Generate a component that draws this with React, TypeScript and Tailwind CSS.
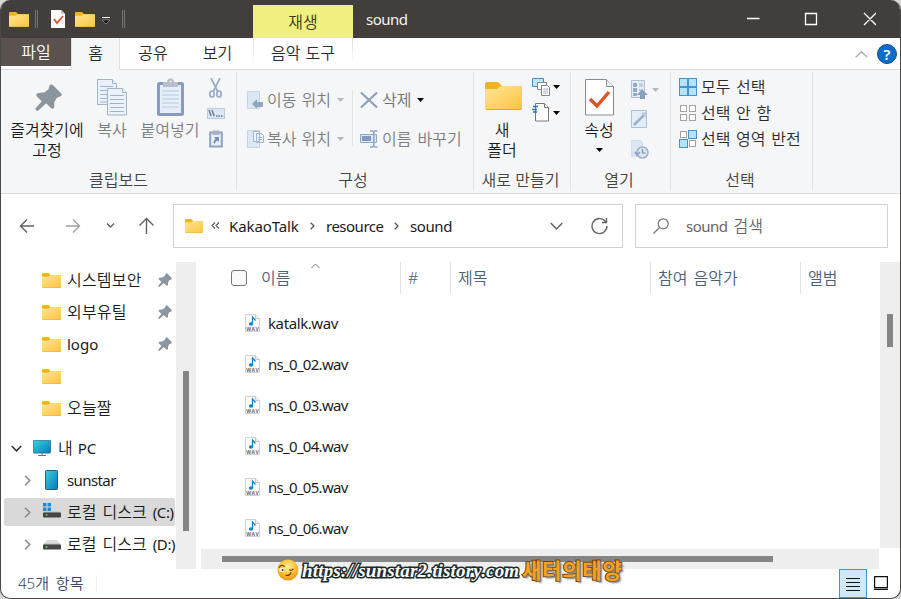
import type { ReactNode } from "react";

const PINNED = [
  { label: "시스템보안", pinned: true },
  { label: "외부유틸", pinned: true },
  { label: "logo", pinned: true },
  { label: "", pinned: false },
  { label: "오늘짤", pinned: false },
];

const FILES = ["katalk.wav", "ns_0_02.wav", "ns_0_03.wav", "ns_0_04.wav", "ns_0_05.wav", "ns_0_06.wav"];

export default function App() {
  return (
    <div className="h-[599px] w-[901px] overflow-hidden bg-[#d8d8d8] font-['Noto_Sans','Noto_Sans_CJK_KR',sans-serif] text-[15px] leading-5 font-[350] text-[#1b1b1b]">
      <div className="relative flex h-full flex-col overflow-hidden rounded-[10px] border border-t-0 border-[#4a4745] bg-white">
        <TitleBar />
        <TabRow />
        <Ribbon />
        <AddressRow />
        <div className="flex h-[307px] shrink-0">
          <Sidebar />
          <FileList />
        </div>
        <StatusBar />
        <Watermark />
      </div>
    </div>
  );
}

function TitleBar() {
  return (
    <div className="flex h-[38px] shrink-0 bg-[#423e3b]">
      <div className="flex w-[252px] items-center pl-2">
        <Folder className="h-[15px] w-5" />
        <div className="ml-[6px] h-[18px] w-[3px] border-x border-[#77736f]" />
        <svg className="ml-[13px] h-[18px] w-[14px]" viewBox="0 0 14 18">
          <path d="M0 0h10l4 4v14H0z" fill="#fafafa" />
          <path d="M10 0v4h4" fill="#cfcfcf" />
          <path d="M3 9l3 4 6-7" fill="none" stroke="#df552b" strokeWidth="1.8" />
        </svg>
        <Folder className="ml-[10px] h-[15px] w-5" />
        <svg className="ml-[7px] mt-1 h-[8px] w-2" viewBox="0 0 8 8">
          <path d="M0 .5h8" stroke="#fff" />
          <path d="M0 3h8L4 7z" fill="#111" stroke="#aaa" strokeWidth=".6" />
        </svg>
        <div className="ml-[12px] h-[18px] w-[3px] border-x border-[#77736f]" />
      </div>
      <div className="mt-[5px] flex h-[33px] w-[100px] items-center justify-center bg-[#eff07e] text-[16px] text-[#3c3a20]">재생</div>
      <div className="flex-1 pl-[13px] pt-[9px] font-normal tracking-[-.5px] text-[#f3f3f3]">sound</div>
      <svg className="mr-[24px] h-[38px] w-[130px] shrink-0" viewBox="746 0 130 38" fill="none" stroke="#fff" strokeWidth="1.3">
        <path d="M747 18.5h12.5M805.500 13.500h11v11h-11zM864 13l12 12M876 13l-12 12" />
      </svg>
    </div>
  );
}

function TabRow() {
  return (
    <div className="flex h-8 shrink-0 bg-[linear-gradient(#fff_31px,#dadbdc_31px)] text-[16px] text-[#2b2b2b]">
      <div className="flex h-7 w-[70px] items-center justify-center bg-[#59524e] text-white">파일</div>
      <div className="flex h-8 w-[49px] items-center justify-center border-x border-[#dfe0e1] bg-[#f4f6f8] pb-[2px]">홈</div>
      <div className="flex h-[30px] w-[66px] items-center justify-center">공유</div>
      <div className="flex h-[30px] w-[63px] items-center justify-center">보기</div>
      <div className="ml-1 h-[26px] w-px bg-linear-to-b from-[#dcdcdc] to-white" />
      <div className="flex h-[30px] w-[98px] items-center justify-center [word-spacing:1px]">음악 도구</div>
      <div className="h-[26px] w-px bg-linear-to-b from-[#dcdcdc] to-white" />
      <div className="flex flex-1 items-center justify-end pr-[3px]">
        <svg className="h-[7px] w-[13px]" viewBox="0 0 13 7" fill="none" stroke="#aaa" strokeWidth="1.400">
          <path d="M.7 6.300L6.500.8l5.800 5.500" />
        </svg>
        <div className="ml-[9px] flex size-5 items-center justify-center rounded-full border border-[#0d4f94] bg-[#0d6cc8] text-[15px] leading-none font-semibold text-white">?</div>
      </div>
    </div>
  );
}

function Group({ label, className, children }: { label: string; className: string; children: ReactNode }) {
  return (
    <div className={`flex shrink-0 flex-col ${className}`}>
      <div className="flex h-[100px]">{children}</div>
      <div className="h-5 text-center whitespace-nowrap text-[#444]">{label}</div>
    </div>
  );
}

function Divider() {
  return <div className="mt-[2px] h-[119px] w-px shrink-0 bg-[#e1e3e5]" />;
}

function BigButton({ icon, lines, caret, className }: { icon: ReactNode; lines: string[]; caret?: boolean; className: string }) {
  return (
    <div className={`flex shrink-0 flex-col items-center whitespace-nowrap ${className}`}>
      <div className="flex h-[50px] w-full justify-center">{icon}</div>
      {lines.map((l) => <div key={l}>{l}</div>)}
      {caret && <Caret className="mt-2 text-black" />}
    </div>
  );
}

function Caret({ className }: { className: string }) {
  return (
    <svg className={`h-1 w-[7px] shrink-0 ${className}`} viewBox="0 0 7 4" fill="currentColor">
      <path d="M0 0h7L3.500 4z" />
    </svg>
  );
}

function Ribbon() {
  return (
    <div className="flex h-[124px] shrink-0 border-b border-[#dadbdc] bg-[#f4f6f8] text-[16px]">
      <Group label="클립보드" className="w-[235px]">
        <BigButton
          className="ml-2 w-[76px]"
          lines={["즐겨찾기에", "고정"]}
          icon={<Pin className="mt-[14px] ml-[2px] size-[27px]" />}
        />
        <BigButton
          className="ml-[11px] w-8 text-[#7c7e80]"
          lines={["복사"]}
          icon={
            <svg className="mt-[9px] h-[37px] w-[30px]" viewBox="0 0 30 37" fill="#eaf1fa" stroke="#9fb2ce">
              <path d="M.5.5h15l4 4v21H.5z" />
              <path d="M15.500.5v4h4M3 7.500h13M3 11.500h13M3 15.500h13M3 19.500h13M3 23h13" />
              <path d="M10.500 9.500h15l4 4v22.500h-19z" />
              <path d="M25.500 9.500v4h4M13 16.500h14M13 20.500h14M13 24.500h14M13 28.500h14M13 32.500h14" />
            </svg>
          }
        />
        <BigButton
          className="ml-[11px] w-[62px] text-[#7c7e80]"
          lines={["붙여넣기"]}
          icon={
            <svg className="mt-2 h-[38px] w-[27px]" viewBox="0 0 27 38">
              <rect x="1.500" y="5.500" width="24" height="31" rx="1" fill="#e4edf8" stroke="#869bbd" strokeWidth="3" />
              <path d="M5 13h17M5 17h17M5 21h17M5 25h17M5 29h17" stroke="#bacce2" />
              <path d="M6 9V4h4c0-5 7-5 7 0h4v5z" fill="#b6bfca" />
              <circle cx="13.500" cy="3.500" r="1" fill="#edf0f4" />
            </svg>
          }
        />
        <div className="ml-[5px] flex w-[19px] flex-col items-center pt-2">
          <svg className="h-[20px] w-[13px]" viewBox="0 0 13 20" fill="none" stroke="#9aabc5">
            <path d="M2 0l7 14M11 0L4 14" strokeWidth="1.700" />
            <ellipse cx="3" cy="16" rx="2.200" ry="3" strokeWidth="1.700" />
            <ellipse cx="10" cy="16" rx="2.200" ry="3" strokeWidth="1.700" />
          </svg>
          <svg className="mt-[10px] h-[11px] w-[18px]" viewBox="0 0 18 11">
            <path d="M.5.5h17v10H.5z" fill="#dbe7f4" stroke="#bccadd" />
            <path d="M2 2l2 6M5 2l2 6M9 8h1.500M11.500 8H13M14 8h1.500" stroke="#647793" strokeWidth="1.400" />
          </svg>
          <svg className="mt-[10px] h-[19px] w-[14px]" viewBox="0 0 14 19">
            <path d="M1.200 3.500h11.600V17.500H1.200z" fill="#e8f0fa" stroke="#8fa3c2" strokeWidth="2" />
            <path d="M3.500 1.500h7V6h-7z" fill="#a8b4c5" />
            <path d="M5 8h5v5L8.500 11.500C6 13 6 14 6 15c-2-1-2-3 .5-5z" fill="#7890b5" />
          </svg>
        </div>
      </Group>
      <Divider />

      <Group label="구성" className="w-[236px] pr-1">
        <div className="ml-[10px] flex w-[105px] flex-col pt-[19px] text-[#7c7e80]">
          <div className="flex h-[22px] items-center whitespace-nowrap">
            <svg className="h-[18px] w-4" viewBox="0 0 16 18">
              <path d="M.5.5h12v17H.5z" fill="#dce7f4" stroke="#c4d3e6" />
              <path d="M5 13l5-5v3h6v5h-6v2z" fill="#91a6c5" />
            </svg>
            <span className="ml-1 w-[66px] [word-spacing:1px]">이동 위치</span>
            <Caret className="ml-1 text-[#b5b7b9]" />
          </div>
          <div className="mt-[17px] flex h-[22px] items-center whitespace-nowrap">
            <svg className="h-[18px] w-[17px]" viewBox="0 0 17 18" fill="#edf4fb" stroke="#a2b6d2">
              <path d="M.5.5h12v17H.5z" fill="#dce7f4" stroke="#c4d3e6" />
              <path d="M6.500 1.500h6v10h-6zM9.500 3.500h5l2 2v7h-7z" />
              <path d="M11 7.500h4M11 9.500h4" />
            </svg>
            <span className="ml-[3px] w-[66px] [word-spacing:1px]">복사 위치</span>
            <Caret className="ml-1 text-[#b5b7b9]" />
          </div>
        </div>
        <div className="mt-[20px] h-[56px] w-px bg-[#e1e3e5]" />
        <div className="ml-[7px] flex flex-col pt-[19px] text-[#7c7e80]">
          <div className="flex h-[22px] items-center whitespace-nowrap">
            <svg className="h-[18px] w-[18px]" viewBox="0 0 19 18" stroke="#8c9fbb" strokeWidth="2.200">
              <path d="M1 1l17 16M18 1L1 17" />
            </svg>
            <span className="ml-[4px] text-[#6f7174]">삭제</span>
            <Caret className="ml-[6px] text-black" />
          </div>
          <div className="mt-[17px] flex h-[22px] items-center whitespace-nowrap">
            <svg className="h-[18px] w-[18px]" viewBox="0 0 18 18" fill="none" stroke="#8fa5c6">
              <path d="M.5 4.500h16v8H.5z" fill="#dce7f4" />
              <path d="M2 6h9v5H2z" fill="#7f99c0" stroke="none" />
              <path d="M10 1h2.500l1.300 1 1.200-1h2.500M13.800 2v14M10 17h2.500l1.300-1 1.200 1h2.500" strokeWidth="1.500" />
            </svg>
            <span className="ml-[4px] [word-spacing:2px]">이름 바꾸기</span>
          </div>
        </div>
      </Group>
      <Divider />

      <Group label="새로 만들기" className="w-[96px] pr-[3px]">
        <BigButton
          className="ml-[8px] w-[40px]"
          lines={["새", "폴더"]}
          icon={<Folder className="mt-[12px] ml-[2px] h-[28px] w-[37px]" />}
        />
        <div className="ml-[10px] flex flex-col pt-[7px]">
          <div className="flex items-center">
            <svg className="h-[20px] w-[20px]" viewBox="0 0 20 20" fill="#fff" stroke="#858585">
              <path d="M.5 1.500h11v8H.5z" fill="#bfe3f7" stroke="#468eb5" />
              <path d="M5.500 5.500h9v7h-9z" />
              <path d="M9.500 8.500h6l2 2v8h-8z" />
              <path d="M11 12h5M11 14h5M11 16h5" stroke="#a3b4cc" />
            </svg>
            <Caret className="ml-px text-black" />
          </div>
          <div className="mt-[6px] flex items-center">
            <svg className="h-[19px] w-[20px]" viewBox="0 0 20 19" fill="#fff" stroke="#777">
              <path d="M3.500.5h9l4 4v13.500h-13z" />
              <path d="M12.500.5v4h4" />
              <path d="M1 3.500h5M0 6.500h5M1 9h4" stroke="#2476c4" strokeWidth="1.400" />
            </svg>
            <Caret className="ml-px text-black" />
          </div>
        </div>
      </Group>
      <Divider />

      <Group label="열기" className="w-[99px] pr-[3px]">
        <BigButton
          caret
          className="ml-[10px] w-[36px]"
          lines={["속성"]}
          icon={
            <svg className="mt-[9px] ml-px h-[37px] w-[29px]" viewBox="0 0 29 37" fill="#fff" stroke="#8b8b8b">
              <path d="M.5.5h21l7 7V36H.5z" />
              <path d="M21.500.5v7h7" fill="#eee" />
              <path d="M5 20l7 7L24 13" fill="none" stroke="#df5224" strokeWidth="3.400" />
            </svg>
          }
        />
        <div className="ml-[14px] flex flex-col pt-[10px]">
          <div className="flex items-center">
            <svg className="h-[20px] w-[17px]" viewBox="0 0 17 20" fill="#e3ecf7" stroke="#aebfd7">
              <path d="M.5.5h13v17H.5z" />
              <path d="M2.500 3.500h3v3h-3zM2.500 8.500h3v3h-3zM2.500 13.500h3v2h-3z" fill="#91a8ca" stroke="#91a8ca" />
              <path d="M8 4h4M8 6h4M8 10h3" stroke="#9eb0ca" />
              <path d="M11 9l6 6h-3v4H9v-4H6z" fill="#8c9fba" stroke="none" />
            </svg>
            <Caret className="ml-1 text-[#b5b7b9]" />
          </div>
          <svg className="mt-[10px] h-[19px] w-[17px]" viewBox="0 0 17 19" fill="#e3ecf7" stroke="#aebfd7">
            <path d="M.5.5h15v17H.5z" />
            <path d="M3 15L14 4" stroke="#9bb0cc" strokeWidth="2.500" />
            <path d="M16 2l-1 6-5-5z" fill="#b8c7dc" stroke="none" />
          </svg>
          <svg className="mt-[11px] h-[19px] w-[18px]" viewBox="0 0 18 19" fill="#dce6f2" stroke="#aebfd7">
            <path d="M.5.5h9l2 2v14H.5z" stroke="#d3deec" />
            <circle cx="11.500" cy="12.500" r="5.500" stroke="#a0b1cb" strokeWidth="1.600" />
            <path d="M11.500 9v4h3M4 12l2 3 3-3" fill="none" stroke="#8da2c0" strokeWidth="1.500" />
          </svg>
        </div>
      </Group>
      <Divider />

      <Group label="선택" className="w-[141px] pr-[3px]">
        <div className="ml-2 flex flex-col pt-[4px] whitespace-nowrap text-[#2b2b2b]">
          <SelectRow label="모두 선택" on={[true, true, true, true]} />
          <SelectRow label="선택 안 함" on={[false, false, false, false]} />
          <SelectRow label="선택 영역 반전" on={[false, true, true, false]} />
        </div>
      </Group>
      <Divider />
    </div>
  );
}

function SelectRow({ label, on }: { label: string; on: boolean[] }) {
  return (
    <div className="flex h-[26px] items-center">
      <svg className="h-[18px] w-[18px]" viewBox="0 0 18 18">
        {on.map((sel, i) => {
          const x = (i % 2) * 9;
          const y = Math.floor(i / 2) * 9;
          return sel ? (
            <rect key={i} x={x + 0.5} y={y + 0.5} width="8" height="8" fill="#b8e2fb" stroke="#3f96d6" />
          ) : (
            <rect key={i} x={x + 1.5} y={y + 1.5} width="6" height="6" fill="#fff" stroke="#a3a3a3" />
          );
        })}
      </svg>
      <span className="ml-[4px] [word-spacing:1.5px]">{label}</span>
    </div>
  );
}

function AddressRow() {
  return (
    <div className="flex h-[68px] shrink-0 pt-[10px]">
      <svg className="h-11 w-[172px] shrink-0" viewBox="1 204 172 44" fill="none" stroke="#606060" strokeWidth="1.400">
        <path d="M34 226H20.500M27 219.500l-6.500 6.500 6.500 6.500" />
        <path d="M66 226h13.500M73 219.500l6.500 6.500-6.500 6.500" stroke="#a0a0a0" />
        <path d="M107 223.500l3.500 3.500 3.500-3.500" />
        <path d="M146.500 234v-15M139.500 225.500l7-7 7 7" />
      </svg>
      <div className="flex h-11 w-[450px] items-center border border-[#d2d2d2] pb-px pl-[11px] pr-[14px] font-normal tracking-[-.5px]">
        <Folder className="h-[14px] w-[18px]" />
        <svg className="ml-2 h-[7px] w-[9px]" viewBox="0 0 9 7" fill="none" stroke="#555" strokeWidth="1.100">
          <path d="M4 .5l-3 3 3 3M8 .5l-3 3 3 3" />
        </svg>
        <span className="ml-[9px] w-[70px] tracking-[-.1px]">KakaoTalk</span>
        <Chevron className="ml-[11px] text-[#555]" />
        <span className="ml-[11px] w-[58px]">resource</span>
        <Chevron className="ml-[10px] text-[#555]" />
        <span className="ml-[11px] tracking-[-.4px]">sound</span>
        <svg className="ml-auto h-[8px] w-[13px]" viewBox="0 0 13 8" fill="none" stroke="#606060" strokeWidth="1.400">
          <path d="M.7 1l5.800 6 5.800-6" />
        </svg>
        <svg className="ml-[28px] h-[18px] w-[17px]" viewBox="0 0 17 18" fill="none" stroke="#666" strokeWidth="1.400">
          <path d="M14.800 5A7.500 7.500 0 1 0 16 9M15.500 1v4.500H11" />
        </svg>
      </div>
      <div className="ml-3 flex h-11 w-[253px] items-center border border-[#d2d2d2] pb-px pl-[17px] text-[#666]">
        <svg className="h-4 w-4" viewBox="0 0 16 16" fill="none" stroke="#777" strokeWidth="1.200">
          <circle cx="10.200" cy="5.800" r="5" />
          <path d="M6.500 9.500L.5 15.500" />
        </svg>
        <span className="ml-[17px] font-normal tracking-[-.5px]">sound</span>
        <span className="ml-[6px] text-[16px]">검색</span>
      </div>
    </div>
  );
}

function Sidebar() {
  return (
    <div className="flex w-[195px] shrink-0 text-[16px]">
      <div className="w-[175px] overflow-hidden pt-[2px] whitespace-nowrap">
        {PINNED.map(({ label, pinned }, i) => (
          <div key={i} className="flex h-8 items-center pl-[41px]">
            <Folder className="h-[15px] w-[19px]" />
            <span className={label === "logo" ? "ml-[6px] text-[15px] font-normal" : "ml-[6px] tracking-[.2px]"}>{label}</span>
            {pinned && <Pin className="ml-auto mr-1 size-[14px]" />}
          </div>
        ))}
        <div className="mt-2 flex h-8 items-center pl-[10px]">
          <svg className="h-[7px] w-[11px]" viewBox="0 0 11 7" fill="none" stroke="#333" strokeWidth="1.600">
            <path d="M.7 1l4.800 4.800L10.300 1" />
          </svg>
          <svg className="ml-[11px] h-[16px] w-[18px]" viewBox="0 0 18 16">
            <rect x=".4" y=".4" width="17.200" height="12.700" rx=".8" fill="url(#screen)" stroke="#25708f" strokeWidth=".8" />
            <path d="M9 13v2.500M5 15.500h8" stroke="#5d7582" />
            <defs>
              <linearGradient id="screen" x2="1" y2="1">
                <stop stopColor="#37d2dc" />
                <stop offset="1" stopColor="#087abd" />
              </linearGradient>
            </defs>
          </svg>
          <span className="ml-[7px]">내</span>
          <span className="ml-[5px] text-[15px] font-normal">PC</span>
        </div>
        <TreeRow label="sunstar">
          <svg className="mr-[3px] ml-[3px] h-[20px] w-[13px]" viewBox="0 0 13 20">
            <rect x=".5" y=".5" width="12" height="19" rx=".8" fill="url(#screen)" stroke="#305c70" />
          </svg>
        </TreeRow>
        <div className="-my-px flex h-[34px] items-center pl-[3px]">
          <div className="h-7 w-[171px] overflow-hidden rounded-xs bg-[#d9d9d9]">
            <div className="-mt-[2px] -ml-[3px]">
              <TreeRow label="로컬 디스크" drive="(C:)">
                <Drive windows />
              </TreeRow>
            </div>
          </div>
        </div>
        <TreeRow label="로컬 디스크" drive="(D:)">
          <Drive />
        </TreeRow>
      </div>
      <div className="flex w-5 justify-center bg-[#eee] pt-[109px]">
        <div className="h-[160px] w-[6px] bg-[#858585]" />
      </div>
    </div>
  );
}

function TreeRow({ label, drive, children }: { label: string; drive?: string; children: ReactNode }) {
  return (
    <div className="flex h-8 items-center pl-[23px]">
      <svg className="h-[11px] w-[7px] shrink-0" viewBox="0 0 7 11" fill="none" stroke="#888" strokeWidth="1.500">
        <path d="M1 .7l4.800 4.800L1 10.300" />
      </svg>
      <div className="ml-[11px] flex w-[19px] shrink-0">{children}</div>
      {drive ? (
        <>
          <span className="ml-[6px] [word-spacing:2px]">{label}</span>
          <span className="ml-[6px] text-[15px] font-normal tracking-[-.4px]">{drive}</span>
        </>
      ) : (
        <span className="ml-[6px] text-[15px] font-normal tracking-[-.6px]">{label}</span>
      )}
    </div>
  );
}

function Drive({ windows }: { windows?: boolean }) {
  return (
    <svg className="ml-px h-[18px] w-[18px]" viewBox="0 0 18 18">
      {windows ? (
        <path d="M0 0h3.500v3.500H0zM4.500 0H8v3.500H4.500zM0 4.500h3.500V8H0zM4.500 4.500H8V8H4.500z" fill="#1f8ad6" />
      ) : (
        <path d="M4 5h10l4 5H0z" fill="#dcdcdc" />
      )}
      <path d="M1.500 8.500h15L18 10H0z" fill="#bdbdbd" />
      <rect y="9.500" width="18" height="5" rx=".8" fill="#454545" />
      <circle cx="3.500" cy="12" r="1" fill="#3fd657" />
    </svg>
  );
}

const COLUMNS = [
  { label: "#", width: "w-[50px]" },
  { label: "제목", width: "w-[200px]" },
  { label: "참여 음악가", width: "w-[150px]" },
  { label: "앨범", width: "w-[79px]" },
];

function FileList() {
  return (
    <>
      <div className="flex w-[683px] shrink-0 flex-col">
        <div className="flex h-8 text-[16px] text-[#4c607a]">
          <div className="flex w-[204px] items-center pl-[35px]">
            <div className="size-4 rounded-[3px] border border-[#777] bg-[#fafafa]" />
            <span className="ml-[14px] w-[29px] whitespace-nowrap">이름</span>
            <svg className="mb-[25px] ml-[21px] h-[6px] w-[9px]" viewBox="0 0 9 6" fill="none" stroke="#777">
              <path d="M.5 5l4-4 4 4" />
            </svg>
          </div>
          {COLUMNS.map((c) => (
            <div key={c.label} className={`flex shrink-0 items-center border-l border-[#e2e2e2] pl-[7px] whitespace-nowrap [word-spacing:2px] ${c.width}`}>
              {c.label}
            </div>
          ))}
        </div>
        <div className="h-[255px] pt-[8px]">
          {FILES.map((f) => (
            <div key={f} className="flex h-[41px] items-center pl-[49px]">
              <svg className="h-[18px] w-[15px]" viewBox="0 0 15 18">
                <path d="M.5.5h10l4 4v13H.5z" fill="#fbfbfb" stroke="#d2d2d2" />
                <path d="M10.500.5v4h4" fill="#eee" stroke="#c5c5c5" />
                <path d="M7.500 10V3l3 3.500" fill="none" stroke="#1684c4" strokeWidth="1.300" />
                <ellipse cx="6" cy="10" rx="2.200" ry="1.700" fill="#1684c4" />
                <text x="1.300" y="16.500" fontSize="5" fontWeight="700" textLength="12.400" fill="#696969">WAV</text>
              </svg>
              <span className={f.startsWith("ns") ? "ml-2 font-normal tracking-[-.7px]" : "ml-2 font-normal tracking-[-.4px]"}>{f}</span>
            </div>
          ))}
        </div>
        <div className="ml-[5px] flex h-5 items-center bg-[#eee] pl-[21px]">
          <div className="h-[6px] w-[551px] bg-[#858585]" />
        </div>
      </div>
      <div className="ml-px h-[286px] w-5 bg-[#eee] pt-[52px] pl-[7px]">
        <div className="h-[33px] w-[6px] bg-[#858585]" />
      </div>
    </>
  );
}

function StatusBar() {
  return (
    <div className="flex flex-1 items-center pl-[17px] text-[15px] text-[#33496b]">
      <span className="w-[66px] pb-[2px] whitespace-nowrap [word-spacing:3px]">45개 항목</span>
      <div className="ml-3 h-[18px] w-px bg-[#f0f0f0]" />
      <div className="ml-auto flex h-[29px] w-7 items-center justify-center border border-[#3b9bc4] bg-[#cfe9f7]">
        <svg className="h-[14px] w-[14px]" viewBox="0 0 14 14" stroke="#111">
          <path d="M0 1.500h14M0 5.500h14M0 9.500h14M0 13.500h14" />
        </svg>
      </div>
      <svg className="mb-[2px] ml-[7px] mr-[12px] h-[14px] w-[14px]" viewBox="0 0 14 14" fill="none" stroke="#111" strokeWidth="1.200">
        <path d="M.6.6h12.800v11H.6zM0 13.400h14" />
      </svg>
    </div>
  );
}

function Watermark() {
  return (
    <div className="absolute top-[559px] left-[276px] flex h-6 items-center whitespace-nowrap">
      <svg className="mb-[2px] h-[22px] w-[22px]" viewBox="0 0 23 23">
        <defs>
          <radialGradient id="sun" cx=".5" cy=".35" r=".65">
            <stop stopColor="#fff0a0" />
            <stop offset=".5" stopColor="#fdc83f" />
            <stop offset="1" stopColor="#ee930e" />
          </radialGradient>
        </defs>
        <circle cx="11.500" cy="11.500" r="11" fill="url(#sun)" />
        <path d="M2 9q3-4 6-1M13 11q2 2 4-1M9 17q4 1 6-3" fill="none" stroke="#794211" strokeWidth="1.300" />
        <ellipse cx="5" cy="11.500" rx="2.800" ry="2" fill="#fff" />
        <circle cx="5.800" cy="11.500" r="1.100" fill="#5b3412" />
      </svg>
      <span className="ml-[3px] w-[217px] font-['Liberation_Serif',serif] text-[19px] font-bold italic tracking-[.17px] text-white [paint-order:stroke] [-webkit-text-stroke:3px_#1c2b28]">
        https://sunstar2.tistory.com
      </span>
      <span className="ml-[3px] pb-[2px] text-[21px] font-bold tracking-[.8px] text-[#f9a11c] [paint-order:stroke] [-webkit-text-stroke:2px_#7a3f08] [text-shadow:2px_2px_2px_#777]">
        새터의태양
      </span>
    </div>
  );
}

function Chevron({ className }: { className: string }) {
  return (
    <svg className={`h-[8px] w-[5px] shrink-0 ${className}`} viewBox="0 0 5 8" fill="none" stroke="currentColor" strokeWidth="1.300">
      <path d="M.7.7L4 4 .7 7.300" />
    </svg>
  );
}

function Folder({ className }: { className: string }) {
  return (
    <svg className={`shrink-0 ${className}`} viewBox="0 0 37 28" preserveAspectRatio="none">
      <defs>
        <linearGradient id="folder" x2="1" y2="1">
          <stop stopColor="#ffe596" />
          <stop offset="1" stopColor="#fbc440" />
        </linearGradient>
      </defs>
      <path d="M0 2q0-2 2-2h10q2 0 3 2l2 2h19q1 0 1 2v4H0z" fill="#f0b420" />
      <path d="M0 7h12l4-3h20q1 0 1 1.500v21q0 1.500-1.500 1.500h-34Q0 28 0 26.500z" fill="url(#folder)" />
      <path d="M1 27.500h35" stroke="#dfa62b" />
    </svg>
  );
}

function Pin({ className }: { className: string }) {
  return (
    <svg className={`shrink-0 ${className}`} viewBox="0 0 28 28" fill="#8b959d">
      <path d="M15 1.500q2-2 4 0l8 8q1.500 2 0 3l-4.500 2-2.500 4.500v5q-1.500 2.500-3.500 1l-5-5L3.500 27.500q-3 1-3-2L7 18l-5-5q-1.500-2 .5-3.500L10 8.500l4-3z" />
    </svg>
  );
}
